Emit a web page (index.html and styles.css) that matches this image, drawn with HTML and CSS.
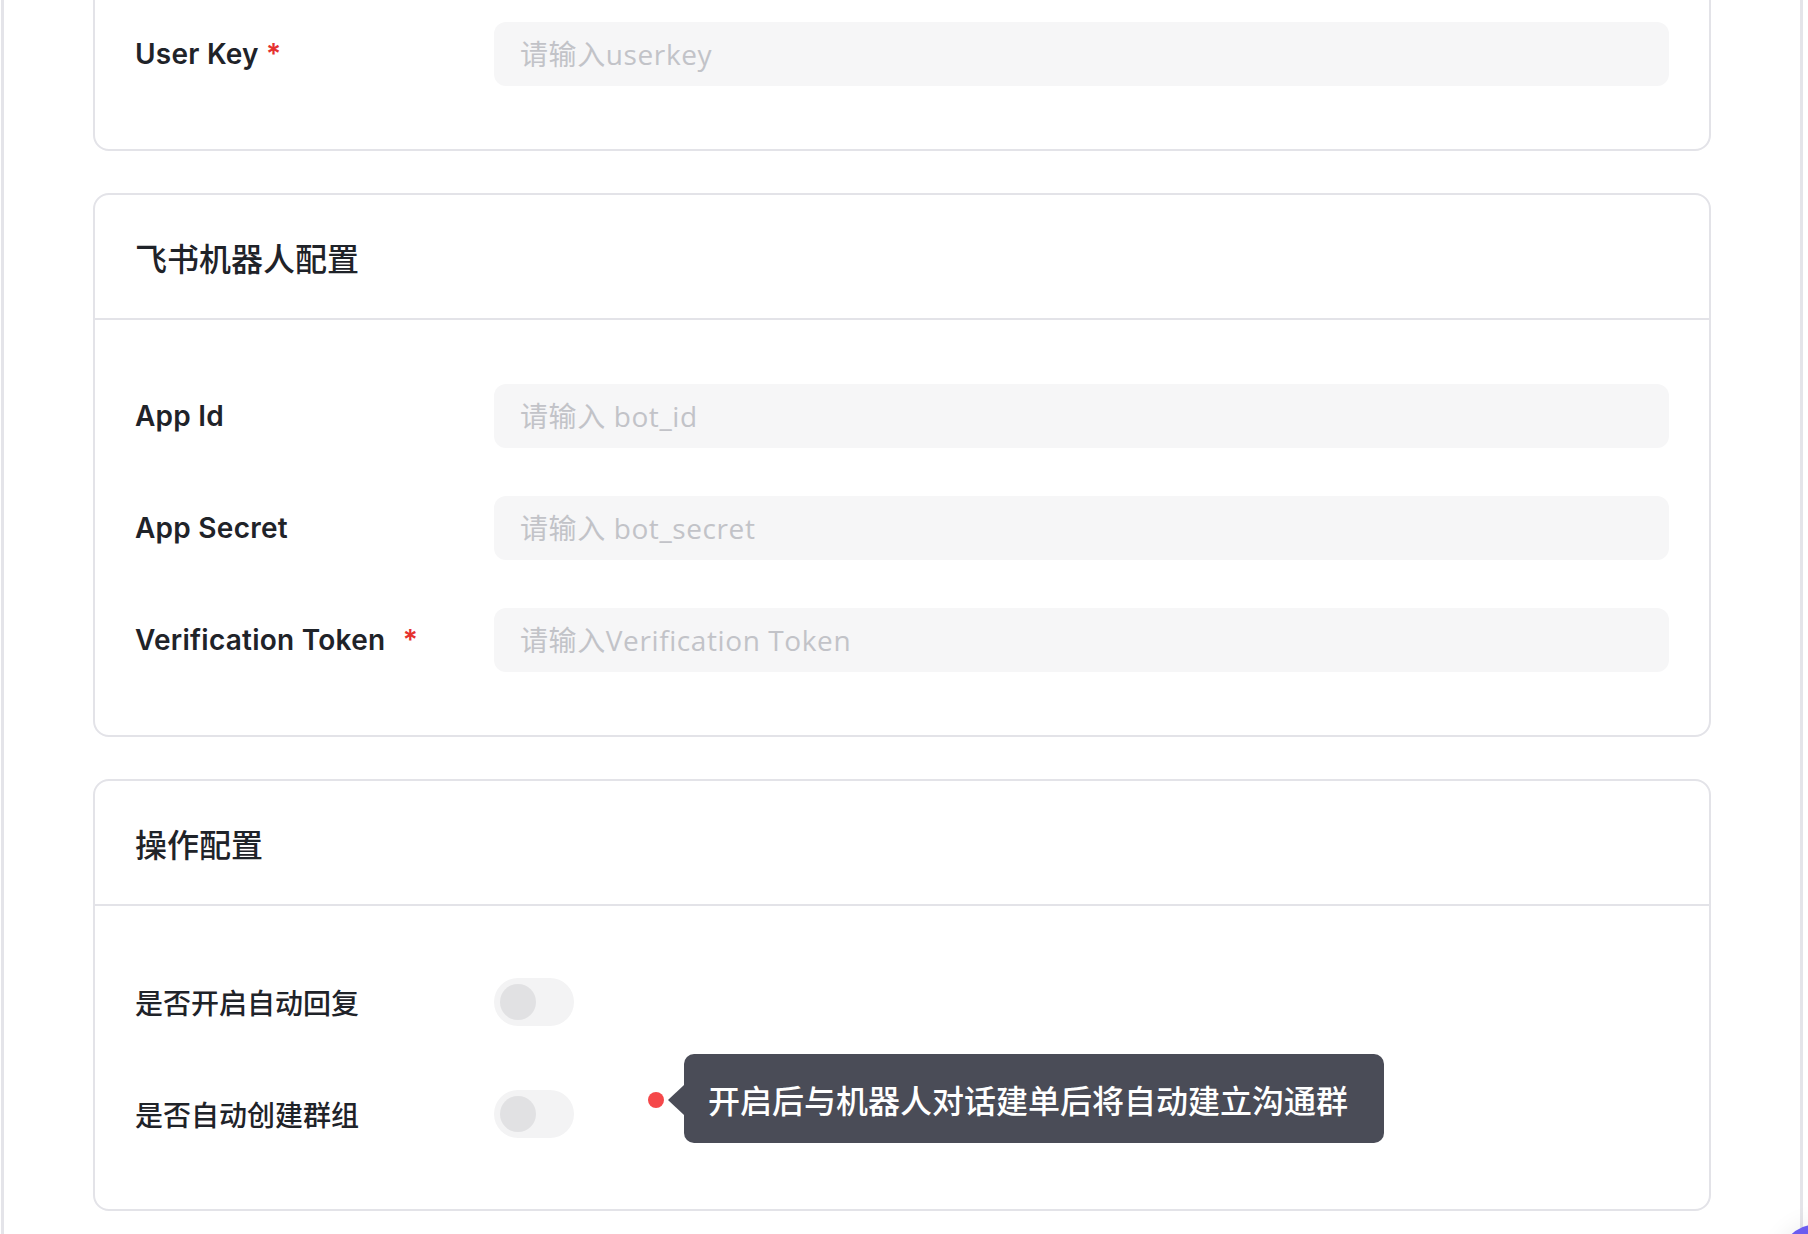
FILE: index.html
```html
<!DOCTYPE html>
<html lang="zh-CN">

<head>
    <meta charset="UTF-8">
    <meta name="viewport" content="width=device-width, initial-scale=1.0">
    <title>机器人配置</title>
    <link rel="stylesheet" href="styles.css">
</head>

<body>
    <div class="panel">
        <!-- 项目配置（上半部分已滚出视口） -->
        <section class="card card-scrolled">
            <div class="card-body">
                <div class="form-row">
                    <label class="form-label">User Key <span class="required">*</span></label>
                    <div class="form-control">
                        <input class="text-input" type="text" placeholder="请输入userkey">
                    </div>
                </div>
            </div>
        </section>

        <section class="card">
            <div class="card-header">
                <h2>飞书机器人配置</h2>
            </div>
            <div class="card-body">
                <div class="form-row">
                    <label class="form-label">App Id</label>
                    <div class="form-control">
                        <input class="text-input" type="text" placeholder="请输入 bot_id">
                    </div>
                </div>
                <div class="form-row">
                    <label class="form-label">App Secret</label>
                    <div class="form-control">
                        <input class="text-input" type="text" placeholder="请输入 bot_secret">
                    </div>
                </div>
                <div class="form-row">
                    <label class="form-label">Verification Token <span class="required required-wide">*</span></label>
                    <div class="form-control">
                        <input class="text-input" type="text" placeholder="请输入Verification Token">
                    </div>
                </div>
            </div>
        </section>

        <section class="card">
            <div class="card-header">
                <h2>操作配置</h2>
            </div>
            <div class="card-body">
                <div class="form-row">
                    <label class="form-label form-label-cn">是否开启自动回复</label>
                    <div class="form-control">
                        <span class="switch"><span class="switch-knob"></span></span>
                    </div>
                </div>
                <div class="form-row">
                    <label class="form-label form-label-cn">是否自动创建群组</label>
                    <div class="form-control">
                        <span class="switch"><span class="switch-knob"></span></span>
                        <div class="guide-tip">
                            <span class="guide-dot"></span>
                            <span class="guide-arrow"></span>
                            <div class="guide-box">开启后与机器人对话建单后将自动建立沟通群</div>
                        </div>
                    </div>
                </div>
            </div>
        </section>
    </div>

    <button class="fab" aria-label="帮助"></button>
</body>

</html>
```

FILE: styles.css
```css
* {
    box-sizing: border-box;
}

html,
body {
    margin: 0;
    height: 100%;
    overflow: hidden;
    background: #fff;
}

body {
    font-family: Inter, "Noto Sans CJK SC", sans-serif;
    color: #1f2329;
}

.panel {
    display: flow-root;
    margin: 0 5px 0 1px;
    min-height: 100%;
    padding: 0 89px;
    border-left: 3px solid #e4e4e9;
    border-right: 3px solid #e4e4e9;
}

.card {
    border: 2px solid #e3e3e8;
    border-radius: 16px;
    background: #fff;
    margin-bottom: 42px;
}

/* first card is scrolled past its header */
.card-scrolled {
    margin-top: -44px;
    border-top-left-radius: 0;
    border-top-right-radius: 0;
}

.card-header {
    height: 125px;
    padding: 0 40px;
    display: flex;
    align-items: center;
    border-bottom: 2px solid #e3e3e8;
}

.card-header h2 {
    margin: 0;
    font-family: "Noto Sans CJK SC", sans-serif;
    font-size: 32px;
    font-weight: 500;
    line-height: 44px;
    color: #1f2329;
}

.card-body {
    padding: 64px 40px 63px;
    display: flex;
    flex-direction: column;
    gap: 48px;
}

.form-row {
    display: flex;
    align-items: center;
    height: 64px;
}

.form-label {
    width: 359px;
    flex-shrink: 0;
    font-size: 28px;
    font-weight: 600;
    line-height: 40px;
    letter-spacing: 0.25px;
    color: #1f2329;
}

.form-label-cn {
    font-family: "Noto Sans CJK SC", sans-serif;
    font-weight: 500;
    letter-spacing: 0;
}

.required {
    color: #e5312f;
}

.required-wide {
    margin-left: 10px;
}

.form-control {
    flex: 1;
    position: relative;
    display: flex;
    align-items: center;
    height: 100%;
}

.text-input {
    width: 100%;
    height: 64px;
    border: none;
    outline: none;
    border-radius: 12px;
    background: #f6f6f7;
    padding: 0 26px;
    font-family: "Open Sans", "Noto Sans CJK SC", sans-serif;
    font-size: 28px;
    letter-spacing: 0.6px;
    color: #1f2329;
}

.text-input::placeholder {
    color: #c2c3c8;
}

/* disabled-looking switch */
.switch {
    width: 80px;
    height: 48px;
    border-radius: 24px;
    background: #f3f3f4;
    display: flex;
    align-items: center;
    padding: 0 6px;
}

.switch-knob {
    width: 36px;
    height: 36px;
    border-radius: 50%;
    background: #e1e1e3;
}

/* onboarding hint next to the switch */
.guide-tip {
    position: absolute;
    left: 154px;
    top: -28px;
    display: flex;
    align-items: center;
}

.guide-dot {
    width: 16px;
    height: 16px;
    border-radius: 50%;
    background: #f5484a;
    margin-right: 4px;
    margin-top: 3px;
}

.guide-arrow {
    width: 0;
    height: 0;
    border-top: 15px solid transparent;
    border-bottom: 15px solid transparent;
    border-right: 16px solid #4a4c57;
    margin-top: 3px;
}

.guide-box {
    width: 700px;
    height: 89px;
    padding: 0 24px;
    display: flex;
    align-items: center;
    background: #4a4c57;
    border-radius: 10px;
    color: #fff;
    font-family: "Noto Sans CJK SC", sans-serif;
    font-size: 32px;
    font-weight: 500;
    white-space: nowrap;
}

.fab {
    position: fixed;
    right: -50px;
    bottom: -70px;
    width: 80px;
    height: 80px;
    border: none;
    border-radius: 50%;
    background: #6b5cf0;
    box-shadow: 0 0 24px rgba(0, 0, 0, 0.08);
}
```
